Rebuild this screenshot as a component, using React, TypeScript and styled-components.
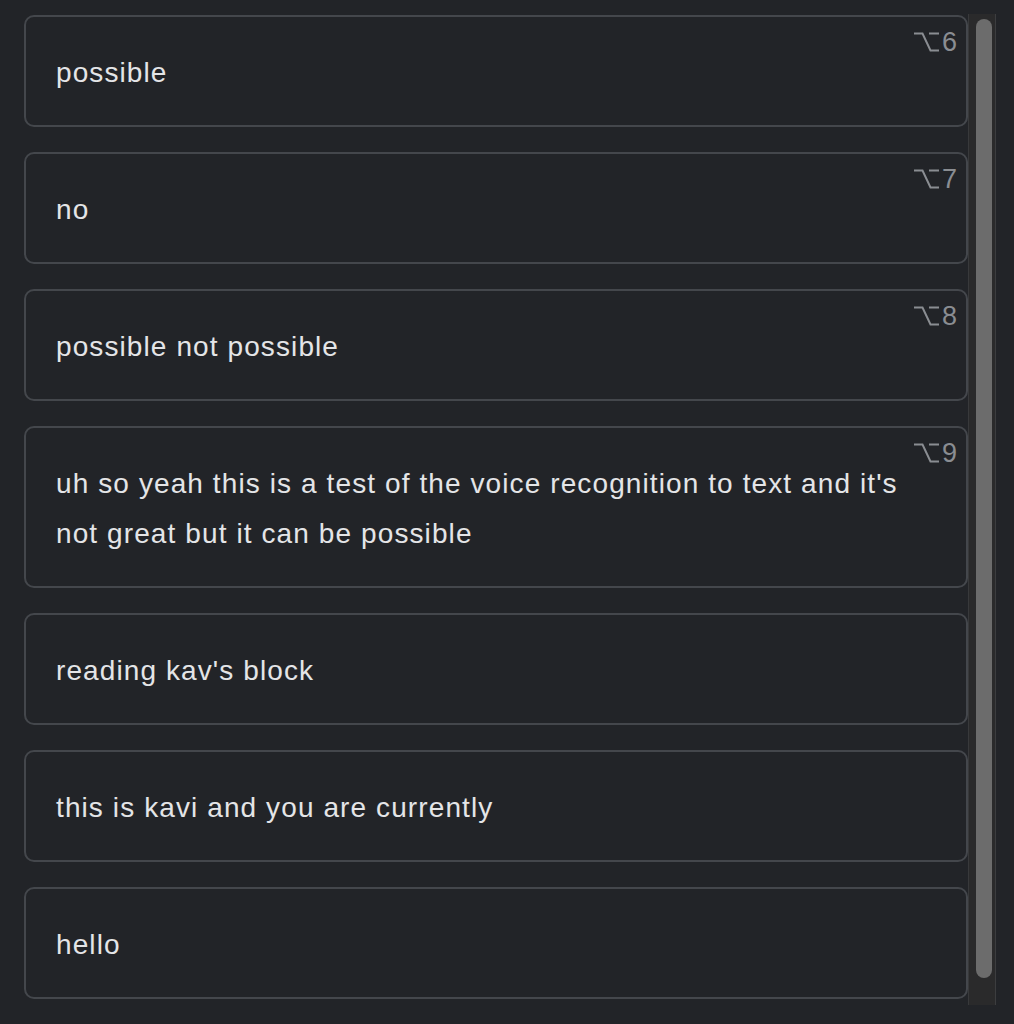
import * as React from 'react';
import styled, { createGlobalStyle } from 'styled-components';

interface Entry {
  text: string;
  shortcut?: string;
}

const entries: Entry[] = [
  { text: 'possible', shortcut: '6' },
  { text: 'no', shortcut: '7' },
  { text: 'possible not possible', shortcut: '8' },
  {
    text: "uh so yeah this is a test of the voice recognition to text and it's not great but it can be possible",
    shortcut: '9',
  },
  { text: "reading kav's block" },
  { text: 'this is kavi and you are currently' },
  { text: 'hello' },
];

const GlobalStyle = createGlobalStyle`
  html, body {
    margin: 0;
    padding: 0;
    background: #222428;
    height: 100%;
    overflow: hidden;
  }
  body {
    font-family: 'Liberation Sans', Arial, sans-serif;
  }
`;

// the ⌥ option key glyph
const OptionIcon: React.FC = () => (
  <svg width="25" height="20" viewBox="0 0 25 20" fill="none">
    <path
      d="M0 1.5H8.5L16.5 18.5H25M15 1.5H25"
      stroke="currentColor"
      strokeWidth="2"
    />
  </svg>
);

const App: React.FC = () => {
  return (
    <>
      <GlobalStyle />
      <Wrapper>
        <List>
          {entries.map((entry, i) => (
            <Card key={i}>
              {entry.shortcut && (
                <Shortcut>
                  <OptionIcon />
                  <span>{entry.shortcut}</span>
                </Shortcut>
              )}
              <Text>{entry.text}</Text>
            </Card>
          ))}
        </List>
        <Track>
          <Thumb />
        </Track>
      </Wrapper>
    </>
  );
};

export default App;

const Wrapper = styled.div`
  display: flex;
  align-items: flex-start;
  width: 1014px;
  height: 1024px;
  box-sizing: border-box;
  padding: 15px 0 0 24px;
  background: #222428;
`;

const List = styled.div`
  display: flex;
  flex-direction: column;
  gap: 25px;
  width: 944px;
  flex-shrink: 0;
`;

const Card = styled.div`
  position: relative;
  box-sizing: border-box;
  padding: 31px 30px 27px 30px;
  border: 2px solid #44474c;
  border-radius: 10px;
  background: #222428;
`;

const Text = styled.div`
  color: #e4e5e7;
  font-size: 28px;
  letter-spacing: 1.1px;
  line-height: 50px;
`;

const Shortcut = styled.div`
  position: absolute;
  top: 15px;
  right: 9px;
  display: flex;
  align-items: center;
  gap: 3px;
  color: #8a8d92;
  font-size: 27px;
  line-height: 20px;

  svg {
    display: block;
  }
`;

const Track = styled.div`
  box-sizing: border-box;
  width: 28px;
  height: 991px;
  margin-top: -1px;
  padding: 5px 0 0 7px;
  background: #2a2a2b;
  border-left: 1px solid #38393b;
  border-right: 1px solid #3c3d3f;
`;

const Thumb = styled.div`
  width: 16px;
  height: 959px;
  border-radius: 8px;
  background: #6c6c6c;
`;
